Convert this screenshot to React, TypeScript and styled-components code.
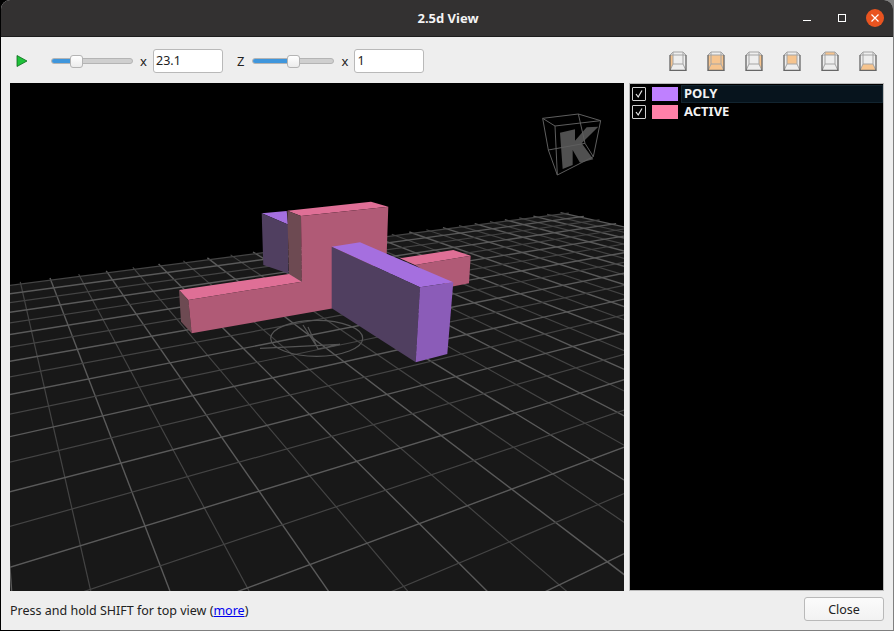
import React from "react";
import styled, { createGlobalStyle } from "styled-components";

const Global = createGlobalStyle`
  html, body { margin: 0; padding: 0; }
  body { background: linear-gradient(90deg, #000 60px, #7f7f7f 60px); }
  #root { width: 894px; height: 631px; }
`;
const font = `"Noto Sans", "Open Sans", sans-serif`;
const Window = styled.div`
  width: 892px; height: 630px; margin-left: 1px; background: #eeeeee;
  border-radius: 9px 9px 0 0; overflow: hidden; display: flex; flex-direction: column;
  font-family: ${font}; font-size: 12.5px; color: #222;
`;
const TitleBar = styled.div`
  height: 37px; box-sizing: border-box; flex: none; background: #333131; border-bottom: 1px solid #1c1c1c;
  display: flex; align-items: center; justify-content: center; position: relative;
`;
const Title = styled.div`color: #f4f4f4; font-weight: 700; font-size: 13px; margin-left: 2px;`;
const WinButtons = styled.div`
  position: absolute; right: 9px; top: 9px; display: flex; align-items: center; gap: 19px;
`;
const MinIcon = styled.svg`width: 10px; height: 10px; margin-right: 6px; display: block;`;
const MaxIcon = styled.svg`width: 10px; height: 10px; display: block;`;
const CloseCircle = styled.div`
  width: 18px; height: 18px; border-radius: 50%; background: #e95420;
  display: flex; align-items: center; justify-content: center;
`;
const Toolbar = styled.div`
  height: 46px; box-sizing: border-box; flex: none; display: flex; align-items: center; padding: 2px 0 0 15px;
`;
const Play = styled.svg`width: 12px; height: 12px; flex: none; margin-right: 23px;`;
const Slider = styled.div<{ $fill: number }>`
  width: 82px; height: 6px; border-radius: 3px; background: #cfcfcf; border: 1px solid #b4b4b4;
  box-sizing: border-box; position: relative; flex: none;
  &::before {
    content: ""; position: absolute; left: 0; top: 0; bottom: 0; width: ${(p) => p.$fill}px;
    background: #3f96dc; border-radius: 3px 0 0 3px;
  }
  &::after {
    content: ""; position: absolute; left: ${(p) => p.$fill - 3}px; top: -4px; width: 13px; height: 13px;
    box-sizing: border-box;
    background: linear-gradient(#ffffff, #ececec); border: 1px solid #b4b4b4; border-radius: 3px;
  }
`;
const Mult = styled.span`margin-left: 7px; margin-right: 6px; font-size: 13px; width: 7px;`;
const NumInput = styled.div`
  width: 70px; height: 24px; box-sizing: border-box; background: #fff; border: 1px solid #b9b9b9;
  border-radius: 3px; padding-left: 2px; line-height: 21px; font-size: 12.5px; flex: none;
`;
const ZLabel = styled.span`margin-left: 14px; margin-right: 8px; font-size: 13px;`;
const Views = styled.div`margin-left: auto; margin-right: 16px; display: flex; gap: 20px;`;
const ViewIcon = styled.svg`width: 18px; height: 20px; flex: none; display: block;`;
const Main = styled.div`
  flex: 1; min-height: 0; display: flex; padding: 0 9px 0 9px; gap: 5px;
`;
const Viewport = styled.div`width: 614px; height: 508px; background: #000; flex: none;`;
const Scene = styled.svg`width: 614px; height: 508px; display: block;`;
const Layers = styled.div`
  flex: 1; background: #000; border: 1px solid #b9b9b9; box-sizing: border-box; padding-top: 1px; height: 508px;
`;
const LayerRow = styled.div`
  display: flex; align-items: center; height: 18px;
`;
const Check = styled.div`
  width: 12px; height: 12px; border: 1px solid #d0d0d0; border-radius: 1px; margin-left: 2px; flex: none;
  display: flex; align-items: center; justify-content: center;
`;
const Swatch = styled.div<{ $c: string }>`
  width: 26px; height: 14px; margin-left: 6px; background: ${(p) => p.$c}; flex: none;
`;
const LayerName = styled.div<{ $sel?: boolean }>`
  flex: 1; margin-left: 3px; height: 18px; line-height: 17px; padding-left: 3px; color: #f2f2f2; font-weight: 700; font-size: 13px;
  box-sizing: border-box;
  ${(p) => (p.$sel ? "background: #07141d; border: 1px solid #12242f; line-height: 15px; padding-left: 2px;" : "")}
`;
const Footer = styled.div`
  height: 39px; flex: none; display: flex; align-items: center; justify-content: space-between; padding: 0 9px 0 9px;
`;
const Link = styled.a`color: #0000ee; text-decoration: underline;`;
const CloseBtn = styled.button`
  width: 80px; height: 24px; margin-bottom: 3px; background: linear-gradient(#fbfbfb, #f2f2f2); border: 1px solid #b9b9b9; border-radius: 3px;
  font-family: ${font}; font-size: 12.5px; color: #222; padding: 0;
`;

type P = [number, number];
// homography from grid coordinates (j across, k into the distance) to the picture
function solve(src: P[], dst: P[]) {
  const A: number[][] = [];
  for (let i = 0; i < 4; i++) {
    const [x, y] = src[i]; const [u, v] = dst[i];
    A.push([x, y, 1, 0, 0, 0, -u * x, -u * y, u]);
    A.push([0, 0, 0, x, y, 1, -v * x, -v * y, v]);
  }
  for (let c = 0; c < 8; c++) {
    let m = c;
    for (let r = c; r < 8; r++) if (Math.abs(A[r][c]) > Math.abs(A[m][c])) m = r;
    [A[c], A[m]] = [A[m], A[c]];
    for (let r = 0; r < 8; r++) {
      if (r === c) continue;
      const f = A[r][c] / A[c][c];
      for (let k = c; k < 9; k++) A[r][k] -= f * A[c][k];
    }
  }
  const h = A.map((r, i) => r[8] / r[i]);
  return (x: number, y: number): P => {
    const w = h[6] * x + h[7] * y + 1;
    return [(h[0] * x + h[1] * y + h[2]) / w, (h[3] * x + h[4] * y + h[5]) / w];
  };
}
const OX = 10, OY = 83;
const project = solve(
  [[0, 0], [8, 0], [0, 15.3], [8, 15.3]],
  [[145 - OX, 526 - OY], [515 - OX, 413 - OY], [50 - OX, 278 - OY], [253 - OX, 252 - OY]]
);
const J0 = -6, J1 = 26, K0 = -6, K1 = 15;
const gridLines: { a: P; b: P; strong: boolean }[] = [];
for (let j = J0; j <= J1; j++) gridLines.push({ a: project(j, K1 + 0.3), b: project(j, K0), strong: j % 2 === 0 });
for (let k = K0; k <= K1; k++) gridLines.push({ a: project(J0, k), b: project(J1 + 0.3, k), strong: k % 2 === 0 });
const ground = [project(J0, K1), project(J1, K1), project(J1, K0), project(J0, K0)].map((p) => p.join(",")).join(" ");

const poly = (pts: P[]) => pts.map(([x, y]) => `${x - OX},${y - OY}`).join(" ");
const faces: { pts: P[]; fill: string }[] = [
  { pts: [[261.7, 213.3], [286.7, 211], [288, 224.5]], fill: "#a56fdf" },
  { pts: [[261.7, 213.3], [288, 224.5], [288.5, 273.5], [263.3, 265]], fill: "#503f60" },
  { pts: [[400, 258.3], [453.3, 250], [470.7, 255.7], [415, 265]], fill: "#df6f96" },
  { pts: [[415, 265], [470.7, 255.7], [469, 283.3], [450, 287]], fill: "#b05a76" },
  { pts: [[287.3, 210.7], [371, 201.7], [388.3, 206.7], [301, 216]], fill: "#df6f96" },
  { pts: [[287.3, 210.7], [301, 216], [301.7, 281.7], [289, 274]], fill: "#6d4a52" },
  { pts: [[179, 290], [289, 274], [301.7, 281.7], [188.3, 300]], fill: "#df6f96" },
  { pts: [[179, 290], [188.3, 300], [191.7, 333.3], [181, 321.7]], fill: "#6d4a52" },
  { pts: [[191.7, 333.3], [188.3, 300], [301.7, 281.7], [301, 216], [388.3, 206.7], [386.7, 254], [332, 308.5]], fill: "#b05a76" },
  { pts: [[331.7, 246.7], [360, 242.3], [453.3, 282.3], [420, 287.3]], fill: "#a56fdf" },
  { pts: [[331.7, 246.7], [420, 287.3], [415.7, 362.3], [331.7, 308.3]], fill: "#503f60" },
  { pts: [[420, 287.3], [453.3, 282.3], [447.3, 354], [415.7, 362.3]], fill: "#8b5cb8" },
];
const cube = (x: number, y: number): [number, number] => [530 + x / 3 - OX, 100 + y / 3 - OY];
const cp = (pts: P[]) => pts.map(([x, y]) => cube(x, y).join(",")).join(" ");

type Face = "left" | "back" | "bottom" | "top" | "right";
const facePts: Record<Face, string> = {
  back: "4,4 14,4 14,13 4,13",
  left: "1,4 4,4 4,13 1,19.5",
  right: "17,4 14,4 14,13 17,19.5",
  top: "4,1 14,1 14,4 4,4",
  bottom: "4,13 14,13 17,19.5 1,19.5",
};
const views: Face[][] = [["left"], ["back", "left", "right", "bottom"], ["right"], ["back"], ["top"], ["bottom"]];

const CubeIcon = ({ faces: f }: { faces: Face[] }) => (
  <ViewIcon viewBox="0 0 18 20">
    {f.map((k) => <polygon key={k} points={facePts[k]} fill="#f6c48e" />)}
    <path d="M1 4L4 1H14L17 4M4 1V4M14 1V4M4 4H14V13H4ZM1 4H4M14 4H17M4 13L1 19.5M14 13L17 19.5" fill="none" stroke="#a4a4a4" strokeWidth="1" />
    <path d="M1 4V19.5H17V4" fill="none" stroke="#666" strokeWidth="1.3" />
  </ViewIcon>
);

const CheckMark = () => (
  <svg width="10" height="10" viewBox="0 0 10 10"><path d="M2 5L4.2 8L8 1.5" fill="none" stroke="#e8e8e8" strokeWidth="1.2" /></svg>
);

export default function App() {
  return (
    <>
      <Global />
      <Window>
        <TitleBar>
          <Title>2.5d View</Title>
          <WinButtons>
            <MinIcon viewBox="0 0 10 10"><path d="M1 7.5H9" stroke="#fff" strokeWidth="1" /></MinIcon>
            <MaxIcon viewBox="0 0 10 10"><rect x="1.5" y="1.5" width="7" height="7" fill="none" stroke="#fff" /></MaxIcon>
            <CloseCircle>
              <svg width="10" height="10" viewBox="0 0 10 10"><path d="M1.5 1.5L8.5 8.5M8.5 1.5L1.5 8.5" stroke="#fff" strokeWidth="1.2" /></svg>
            </CloseCircle>
          </WinButtons>
        </TitleBar>
        <Toolbar>
          <Play viewBox="0 0 12 12"><polygon points="1,0.5 11,6 1,11.5" fill="#1fc23a" stroke="#0b6b1c" strokeWidth="0.8" /></Play>
          <Slider $fill={21} />
          <Mult>x</Mult>
          <NumInput>23.1</NumInput>
          <ZLabel>Z</ZLabel>
          <Slider $fill={37} />
          <Mult>x</Mult>
          <NumInput>1</NumInput>
          <Views>
            {views.map((f, i) => <CubeIcon key={i} faces={f} />)}
          </Views>
        </Toolbar>
        <Main>
          <Viewport>
            <Scene viewBox="0 0 614 508">
              <polygon points={ground} fill="#181818" />
              {gridLines.map((l, i) => (
                <line key={i} x1={l.a[0]} y1={l.a[1]} x2={l.b[0]} y2={l.b[1]} stroke={l.strong ? "#5a5a5a" : "#444"} strokeWidth={l.strong ? 1.4 : 1.2} />
              ))}
              <g fill="none" stroke="#555" strokeWidth="1.2">
                <ellipse cx={316.7 - OX} cy={338.3 - OY} rx="46" ry="18" />
                <path d={`M${260 - OX} ${348.3 - OY}L${340 - OX} ${344.3 - OY}M${303 - OX} ${325 - OY}L${317 - OX} ${347 - OY}M${308 - OX} ${327 - OY}L${318 - OX} ${349 - OY}L${340 - OX} ${344.3 - OY}`} />
              </g>
              {faces.map((f, i) => <polygon key={i} points={poly(f.pts)} fill={f.fill} />)}
              <polygon points={cp([[90, 98], [135, 88], [135, 122], [170, 82], [205, 80], [155, 130], [190, 178], [150, 188], [128, 150], [128, 195], [98, 207]])} fill="#505050" />
              <g fill="none" stroke="#5e5e5e" strokeWidth="1">
                <polygon points={cp([[38, 55], [145, 42], [212, 62], [75, 78]])} />
                <polygon points={cp([[55, 150], [165, 130], [190, 170], [82, 225]])} />
                <polyline points={cp([[38, 55], [55, 150]])} />
                <polyline points={cp([[75, 78], [82, 225]])} />
                <polyline points={cp([[145, 42], [165, 130]])} />
                <polyline points={cp([[212, 62], [190, 170]])} />
              </g>
            </Scene>
          </Viewport>
          <Layers>
            <LayerRow>
              <Check><CheckMark /></Check>
              <Swatch $c="#bf80ff" />
              <LayerName $sel>POLY</LayerName>
            </LayerRow>
            <LayerRow>
              <Check><CheckMark /></Check>
              <Swatch $c="#ff80a8" />
              <LayerName>ACTIVE</LayerName>
            </LayerRow>
          </Layers>
        </Main>
        <Footer>
          <span>Press and hold SHIFT for top view (<Link href="#">more</Link>)</span>
          <CloseBtn>Close</CloseBtn>
        </Footer>
      </Window>
    </>
  );
}
